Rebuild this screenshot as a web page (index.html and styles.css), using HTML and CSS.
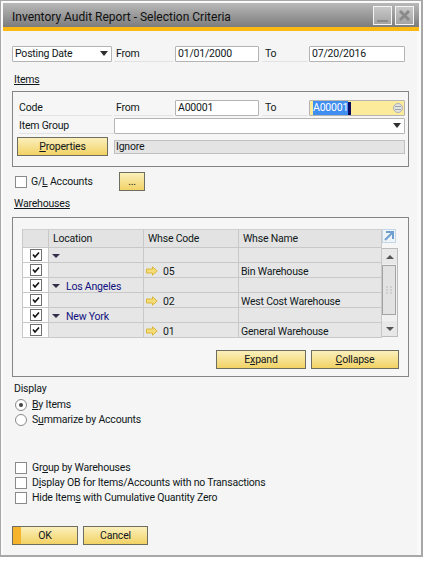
FILE: index.html
```html
<!DOCTYPE html>
<html lang="en">
<head>
    <meta charset="UTF-8">
    <title>Inventory Audit Report - Selection Criteria</title>
    <link rel="stylesheet" href="styles.css">
</head>
<body>
    <div class="window">
        <div class="title-bar">
            <span class="title">Inventory Audit Report - Selection Criteria</span>
            <span class="win-btn"><span class="min-glyph"></span></span>
            <span class="win-btn">
                <svg width="13" height="13" viewBox="0 0 13 13"><path d="M2 2 L11 11 M11 2 L2 11" stroke="#8a8a8a" stroke-width="3" fill="none"/></svg>
            </span>
        </div>
        <div class="content">
            <div class="row date-row">
                <div class="select select-date">Posting Date<span class="caret"></span></div>
                <span class="label label-from">From</span>
                <div class="input input-from">01/01/2000</div>
                <span class="label label-to">To</span>
                <div class="input input-to">07/20/2016</div>
            </div>

            <div class="section-title items-title"><u>Items</u></div>
            <div class="group items-group">
                <div class="row">
                    <span class="label label-code">Code</span>
                    <span class="label label-from">From</span>
                    <div class="input input-from">A00001</div>
                    <span class="label label-to">To</span>
                    <div class="input input-to input-active">
                        <span class="selected">A00001</span><span class="cursor"></span>
                        <svg class="list-icon" width="10" height="10" viewBox="0 0 10 10"><circle cx="5" cy="5" r="4.5" fill="#e4e4dc" stroke="#a8b0b8"/><path d="M2 3.5 H8 M2 6.5 H8" stroke="#9aa4ae"/></svg>
                    </div>
                </div>
                <div class="row group-row">
                    <span class="label label-code label-short">Item Group</span>
                    <div class="select select-group"><span class="caret"></span></div>
                </div>
                <div class="row props-row">
                    <button class="btn btn-props"><u>P</u>roperties</button>
                    <div class="ignore"><span>Ignore</span></div>
                </div>
            </div>

            <div class="row gl-row">
                <span class="check"></span>
                <span class="check-label gl-label">G/<u>L</u> Accounts</span>
                <button class="btn btn-dots">...</button>
            </div>

            <div class="section-title wh-title"><u>Warehouses</u></div>
            <div class="group wh-group">
                <div class="grid-wrap">
                    <div class="grid">
                        <div class="cell head"></div>
                        <div class="cell head head-loc">Location</div>
                        <div class="cell head head-code">Whse Code</div>
                        <div class="cell head head-name">Whse Name</div>

                        <div class="cell cell-check"><span class="tick"><svg width="10" height="10" viewBox="0 0 10 10"><path d="M2 4.5 L4 7 L8 2.5" stroke="#111" stroke-width="1.6" fill="none"/></svg></span></div>
                        <div class="cell"><span class="tree"></span></div>
                        <div class="cell"></div>
                        <div class="cell"></div>

                        <div class="cell cell-check"><span class="tick"><svg width="10" height="10" viewBox="0 0 10 10"><path d="M2 4.5 L4 7 L8 2.5" stroke="#111" stroke-width="1.6" fill="none"/></svg></span></div>
                        <div class="cell"></div>
                        <div class="cell"><svg class="link-arrow" width="12" height="10" viewBox="0 0 12 10"><path d="M0.5 3 H6.5 V0.8 L11.2 5 L6.5 9.2 V7 H0.5 Z" fill="#f5dc78" stroke="#d8b93c"/></svg>05</div>
                        <div class="cell">Bin Warehouse</div>

                        <div class="cell cell-check"><span class="tick"><svg width="10" height="10" viewBox="0 0 10 10"><path d="M2 4.5 L4 7 L8 2.5" stroke="#111" stroke-width="1.6" fill="none"/></svg></span></div>
                        <div class="cell"><span class="tree"></span><span class="loc-name">Los Angeles</span></div>
                        <div class="cell"></div>
                        <div class="cell"></div>

                        <div class="cell cell-check"><span class="tick"><svg width="10" height="10" viewBox="0 0 10 10"><path d="M2 4.5 L4 7 L8 2.5" stroke="#111" stroke-width="1.6" fill="none"/></svg></span></div>
                        <div class="cell"></div>
                        <div class="cell"><svg class="link-arrow" width="12" height="10" viewBox="0 0 12 10"><path d="M0.5 3 H6.5 V0.8 L11.2 5 L6.5 9.2 V7 H0.5 Z" fill="#f5dc78" stroke="#d8b93c"/></svg>02</div>
                        <div class="cell">West Cost Warehouse</div>

                        <div class="cell cell-check"><span class="tick"><svg width="10" height="10" viewBox="0 0 10 10"><path d="M2 4.5 L4 7 L8 2.5" stroke="#111" stroke-width="1.6" fill="none"/></svg></span></div>
                        <div class="cell"><span class="tree"></span><span class="loc-name">New York</span></div>
                        <div class="cell"></div>
                        <div class="cell"></div>

                        <div class="cell cell-check"><span class="tick"><svg width="10" height="10" viewBox="0 0 10 10"><path d="M2 4.5 L4 7 L8 2.5" stroke="#111" stroke-width="1.6" fill="none"/></svg></span></div>
                        <div class="cell"></div>
                        <div class="cell"><svg class="link-arrow" width="12" height="10" viewBox="0 0 12 10"><path d="M0.5 3 H6.5 V0.8 L11.2 5 L6.5 9.2 V7 H0.5 Z" fill="#f5dc78" stroke="#d8b93c"/></svg>01</div>
                        <div class="cell">General Warehouse</div>
                    </div>
                    <div class="grid-side">
                        <svg class="expand-icon" width="14" height="14" viewBox="0 0 14 14"><rect x="0.5" y="0.5" width="13" height="13" fill="#eef3f8" stroke="#c4d6e8"/><path d="M4 3 H11 V10 M10.5 3.5 L3 11" stroke="#6f9fd0" stroke-width="2" fill="none"/></svg>
                        <div class="scrollbar">
                            <div class="scroll-btn"><span class="arrow-up"></span></div>
                            <div class="thumb">
                                <svg width="6" height="8" viewBox="0 0 6 8"><path d="M0 0h2v2H0zM4 0h2v2H4zM0 3h2v2H0zM4 3h2v2H4zM0 6h2v2H0zM4 6h2v2H4z" fill="#cfcfcf"/></svg>
                            </div>
                            <div class="scroll-btn scroll-down"><span class="arrow-down"></span></div>
                        </div>
                    </div>
                </div>
                <div class="row wh-buttons">
                    <button class="btn btn-expand">E<u>x</u>pand</button>
                    <button class="btn btn-collapse"><u>C</u>ollapse</button>
                </div>
            </div>

            <div class="display-title">Display</div>
            <div class="option option-first"><span class="radio radio-on"></span><span class="check-label"><u>B</u>y Items</span></div>
            <div class="option"><span class="radio"></span><span class="check-label">S<u>u</u>mmarize by Accounts</span></div>

            <div class="option option-gap"><span class="check"></span><span class="check-label">Gr<u>o</u>up by Warehouses</span></div>
            <div class="option"><span class="check"></span><span class="check-label">D<u>i</u>splay OB for Items/Accounts with no Transactions</span></div>
            <div class="option"><span class="check"></span><span class="check-label">Hide Item<u>s</u> with Cumulative Quantity Zero</span></div>

            <div class="row footer">
                <button class="btn btn-ok">OK</button>
                <button class="btn btn-cancel">Cancel</button>
            </div>
        </div>
    </div>
</body>
</html>
```

FILE: styles.css
```css
body {
    margin: 0;
    background-color: #ffffff;
    font-family: Roboto, "Noto Sans", sans-serif;
    font-size: 10.5px;
    letter-spacing: -0.2px;
    color: #101820;
}
.window {
    width: 423px;
    height: 557px;
    box-sizing: border-box;
    border: 1px solid #a8a8a8;
    border-right-width: 2px;
    border-bottom-width: 2px;
    padding: 2px;
    background-color: #fafafa;
    overflow: hidden;
}
.title-bar {
    display: flex;
    align-items: center;
    height: 24px;
    padding-left: 9px;
    padding-right: 5px;
    gap: 3px;
    background: linear-gradient(#b8b8b8, #7c7c7c);
    border-bottom: 4px solid #fdb913;
}
.title {
    flex: 1;
    padding-top: 3px;
    font-size: 12px;
    letter-spacing: 0;
    color: #101010;
}
.win-btn {
    display: flex;
    align-items: center;
    justify-content: center;
    width: 17px;
    height: 17px;
    margin-top: 1px;
    border: 1px solid #f4f4f4;
    background: linear-gradient(#c8c8c8, #a4a4a4);
}
.min-glyph {
    width: 11px;
    height: 2px;
    margin-top: 10px;
    background-color: #8a8a8a;
}
.content {
    height: 525px;
    box-sizing: border-box;
    padding-top: 15px;
    padding-left: 9px;
    margin-right: 2px;
    background-color: #f5f5f5;
}
.row {
    display: flex;
    align-items: center;
}
.label {
    line-height: 14px;
    border-bottom: 1px solid #e2e2e2;
    height: 14px;
}
.label-from {
    width: 57px;
    margin-left: 2px;
    padding-left: 2px;
    margin-right: 2px;
    box-sizing: content-box;
}
.label-to {
    width: 43px;
    margin-left: 3px;
    padding-left: 3px;
    margin-right: 1px;
}
.label-code {
    width: 93px;
    margin-left: 6px;
}
.label-short {
    width: 95px;
    margin-right: 0;
}
.input, .select {
    position: relative;
    height: 14px;
    line-height: 14px;
    background-color: #ffffff;
    border: 1px solid #b4b4b4;
    border-radius: 1px;
    padding-left: 2px;
    box-sizing: content-box;
}
.input-from {
    width: 80px;
}
.input-to {
    width: 92px;
}
.input-active {
    display: flex;
    align-items: center;
    background-color: #fdeb9c;
}
.selected {
    margin-left: 1px;
    background-color: #3f8ef0;
    color: #ffffff;
}
.cursor {
    width: 3px;
    height: 13px;
    background-color: #0a0a60;
}
.list-icon {
    margin-left: auto;
    margin-right: 1px;
}
.select-date {
    width: 96px;
}
.select-group {
    width: 287px;
    margin-left: 0;
}
.caret {
    position: absolute;
    right: 3px;
    top: 4px;
    border-left: 4px solid transparent;
    border-right: 4px solid transparent;
    border-top: 5px solid #303030;
}
.section-title {
    line-height: 14px;
    margin-left: 2px;
}
.items-title {
    margin-top: 11px;
}
.group {
    border: 1px solid #858585;
    width: 397px;
    box-sizing: border-box;
    background-color: #f6f6f6;
}
.items-group {
    height: 76px;
    margin-top: 4px;
    padding-top: 8px;
}
.group-row {
    margin-top: 2px;
}
.props-row {
    margin-top: 3px;
}
.btn {
    display: block;
    height: 19px;
    padding: 0;
    box-sizing: border-box;
    font-family: inherit;
    font-size: 10.5px;
    letter-spacing: -0.2px;
    color: #101820;
    border: 1px solid #6e6e60;
    background: linear-gradient(#fbf0bc, #f2d265);
}
.btn-props {
    width: 91px;
    margin-left: 4px;
    margin-right: 6px;
}
.ignore {
    width: 291px;
    height: 14px;
    line-height: 12px;
    box-sizing: border-box;
    border: 1px solid #c0c0c0;
    background-color: #e4e4e4;
    padding-left: 1px;
}
.gl-row {
    margin-top: 5px;
    padding-left: 3px;
}
.check {
    display: block;
    flex: none;
    width: 10px;
    height: 10px;
    border: 1px solid #8a8a8a;
    background-color: #ffffff;
}
.check-label {
    margin-left: 5px;
    line-height: 14px;
}
.gl-label {
    width: 83px;
    margin-left: 4px;
}
.btn-dots {
    width: 26px;
    margin-left: 5px;
}
.wh-title {
    margin-top: 6px;
}
.wh-group {
    height: 160px;
    margin-top: 6px;
    padding-top: 11px;
    padding-left: 9px;
}
.grid-wrap {
    display: flex;
}
.grid {
    display: grid;
    grid-template-columns: 26px 95px 95px 143px;
    grid-template-rows: 19px;
    grid-auto-rows: 15px;
    width: 360px;
    border-left: 1px solid #c8c8c8;
    box-sizing: border-box;
}
.cell {
    display: flex;
    align-items: center;
    box-sizing: border-box;
    min-width: 0;
    padding-left: 2px;
    padding-top: 2px;
    background-color: #e6e6e6;
    border-right: 1px solid #c8c8c8;
    border-bottom: 1px solid #c8c8c8;
    white-space: nowrap;
}
.head {
    background-color: #e3e3e3;
    border-top: 1px solid #d0d0d0;
    padding-left: 4px;
    padding-top: 0;
}
.cell-check {
    justify-content: center;
    padding-left: 0;
    padding-top: 0;
    background-color: #ffffff;
}
.tick {
    display: flex;
    width: 10px;
    height: 10px;
    border: 1px solid #707070;
    background-color: #ffffff;
}
.tree {
    width: 0;
    height: 0;
    margin-left: 1px;
    border-left: 4px solid transparent;
    border-right: 4px solid transparent;
    border-top: 4px solid #30304a;
}
.loc-name {
    margin-left: 6px;
    color: #101080;
}
.link-arrow {
    flex: none;
    margin-right: 5px;
}
.grid-side {
    display: flex;
    flex-direction: column;
}
.expand-icon {
    display: block;
    margin-bottom: 5px;
}
.scrollbar {
    display: flex;
    flex-direction: column;
    width: 16px;
    height: 89px;
    box-sizing: border-box;
    border: 1px solid #bcbcbc;
    border-left: none;
    background-color: #f0f0f0;
}
.scroll-btn {
    display: flex;
    align-items: center;
    justify-content: center;
    width: 15px;
    height: 15px;
    flex: none;
    background-color: #e8e8e8;
}
.scroll-down {
    margin-top: auto;
}
.arrow-up {
    border-left: 4px solid transparent;
    border-right: 4px solid transparent;
    border-bottom: 4px solid #555555;
}
.arrow-down {
    border-left: 4px solid transparent;
    border-right: 4px solid transparent;
    border-top: 4px solid #555555;
}
.thumb {
    display: flex;
    align-items: center;
    justify-content: center;
    width: 14px;
    height: 50px;
    box-sizing: border-box;
    margin-top: 1px;
    border: 1px solid #a4a4a4;
    background-color: #e2e2e2;
}
.wh-buttons {
    justify-content: flex-end;
    gap: 5px;
    margin-top: 12px;
    margin-right: 9px;
}
.btn-expand {
    width: 90px;
}
.btn-collapse {
    width: 88px;
}
.display-title {
    line-height: 14px;
    margin-top: 5px;
    margin-left: 2px;
}
.option {
    display: flex;
    align-items: center;
    height: 15px;
    padding-left: 3px;
}
.option-first {
    margin-top: 1px;
}
.option-gap {
    margin-top: 33px;
}
.radio {
    display: flex;
    align-items: center;
    justify-content: center;
    flex: none;
    width: 10px;
    height: 10px;
    border: 1px solid #8a8a8a;
    border-radius: 50%;
    background-color: #ffffff;
}
.radio-on::before {
    content: "";
    width: 4px;
    height: 4px;
    border-radius: 50%;
    background-color: #444444;
}
.footer {
    gap: 5px;
    margin-top: 21px;
}
.btn-ok {
    width: 66px;
    background: linear-gradient(90deg, #f6b32c 8px, transparent 8px), linear-gradient(#fbf0bc, #f2d265);
}
.btn-cancel {
    width: 65px;
}
```
